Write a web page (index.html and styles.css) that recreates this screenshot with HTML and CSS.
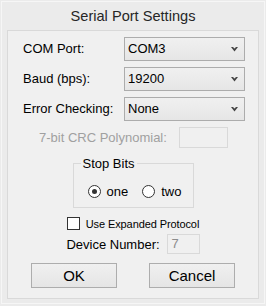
FILE: index.html
```html
<!DOCTYPE html>
<html lang="en">
<head>
    <meta charset="UTF-8">
    <meta name="viewport" content="width=device-width, initial-scale=1.0">
    <title>Serial Port Settings</title>
    <link rel="stylesheet" href="styles.css">
</head>
<body>

    <div class="frame">
        <div class="title">Serial Port Settings</div>
        <div class="panel">
            <div class="fields">
                <label>COM Port:</label>
                <div class="combo">
                    <span>COM3</span>
                    <svg width="7" height="5" viewBox="0 0 7 5"><polygon points="0,0 2,0 3.5,1.6 5,0 7,0 3.5,4.5" fill="#444"/></svg>
                </div>
                <label>Baud (bps):</label>
                <div class="combo">
                    <span>19200</span>
                    <svg width="7" height="5" viewBox="0 0 7 5"><polygon points="0,0 2,0 3.5,1.6 5,0 7,0 3.5,4.5" fill="#444"/></svg>
                </div>
                <label>Error Checking:</label>
                <div class="combo">
                    <span>None</span>
                    <svg width="7" height="5" viewBox="0 0 7 5"><polygon points="0,0 2,0 3.5,1.6 5,0 7,0 3.5,4.5" fill="#444"/></svg>
                </div>
            </div>

            <div class="crc-row">
                <span class="muted">7-bit CRC Polynomial:</span>
                <span class="textbox crc-box"></span>
            </div>

            <fieldset class="stop-bits">
                <legend>Stop Bits</legend>
                <div class="radios">
                    <span class="radio checked"></span><span class="radio-text">one</span>
                    <span class="radio second"></span><span class="radio-text">two</span>
                </div>
            </fieldset>

            <div class="check-row">
                <span class="checkbox"></span>
                <span class="check-text">Use Expanded Protocol</span>
            </div>

            <div class="device-row">
                <span>Device Number:</span>
                <span class="textbox device-box">7</span>
            </div>

            <div class="buttons">
                <button>OK</button>
                <button>Cancel</button>
            </div>
        </div>
    </div>

</body>
</html>
```

FILE: styles.css
```css
body {
    margin: 0;
    background-color: #ebebeb;
    font-family: "Liberation Sans", Arial, sans-serif;
    color: #000;
}
.frame {
    margin: 1px;
    border: 1px solid #f6f6f6;
    background-color: #ebebeb;
}
.title {
    height: 28px;
    line-height: 28px;
    text-align: center;
    font-size: 14.6px;
    color: #262626;
}
.panel {
    margin: 0 5px 4px 5px;
    border: 1px solid #d9d9d9;
    background-color: #f0f0f0;
    padding-bottom: 10px;
}
.fields {
    display: grid;
    grid-template-columns: 101px 121px;
    row-gap: 6px;
    padding: 6px 0 0 15px;
    font-size: 13px;
}
.fields label {
    line-height: 24px;
}
.combo {
    height: 24px;
    box-sizing: border-box;
    border: 1px solid #acacac;
    background: linear-gradient(#f0f0f0, #e6e6e6);
    display: flex;
    align-items: center;
    justify-content: space-between;
    padding: 0 6px 0 3px;
    line-height: 22px;
}
.combo svg {
    display: block;
}
.crc-row {
    display: flex;
    align-items: center;
    gap: 12px;
    margin-top: 6px;
    padding-left: 31px;
    font-size: 13px;
}
.muted {
    color: #a0a0a0;
}
.textbox {
    box-sizing: border-box;
    border: 1px solid #d9d9d9;
    background-color: #f0f0f0;
    color: #8c8c8c;
}
.crc-box {
    width: 49px;
    height: 21px;
}
.stop-bits {
    width: 121px;
    min-width: 0;
    box-sizing: border-box;
    margin: 8px auto 0 auto;
    padding: 0 0 8px 14px;
    border: 1px solid #d9d9d9;
    font-size: 13px;
}
.stop-bits legend {
    line-height: 15px;
    padding: 0 2px;
    margin-left: -7px;
}
.radios {
    display: flex;
    align-items: center;
    height: 15px;
    margin-top: 13px;
}
.radio {
    width: 13px;
    height: 13px;
    flex-shrink: 0;
    box-sizing: border-box;
    border: 1px solid #333;
    border-radius: 50%;
    background-color: #fff;
    display: flex;
    align-items: center;
    justify-content: center;
}
.radio.second {
    margin-left: 14px;
}
.radio.checked::after {
    content: "";
    width: 5px;
    height: 5px;
    border-radius: 50%;
    background-color: #333;
}
.radio-text {
    margin-left: 6px;
}
.check-row {
    display: flex;
    align-items: center;
    justify-content: center;
    gap: 6px;
    margin-top: 9px;
    height: 13px;
}
.checkbox {
    width: 13px;
    height: 13px;
    box-sizing: border-box;
    border: 1px solid #333;
    background-color: #fff;
}
.check-text {
    font-size: 11px;
    letter-spacing: -0.1px;
}
.device-row {
    display: flex;
    align-items: center;
    justify-content: center;
    gap: 7px;
    margin-top: 4px;
    font-size: 13px;
}
.device-box {
    width: 33px;
    height: 20px;
    line-height: 18px;
    padding-left: 4px;
}
.buttons {
    display: flex;
    justify-content: center;
    gap: 32px;
    margin-top: 9px;
}
.buttons button {
    width: 86px;
    height: 25px;
    border: 1px solid #adadad;
    background: linear-gradient(#f0f0f0, #e5e5e5);
    font-family: "Liberation Sans", Arial, sans-serif;
    font-size: 15px;
    color: #000;
    padding: 0;
}
```
